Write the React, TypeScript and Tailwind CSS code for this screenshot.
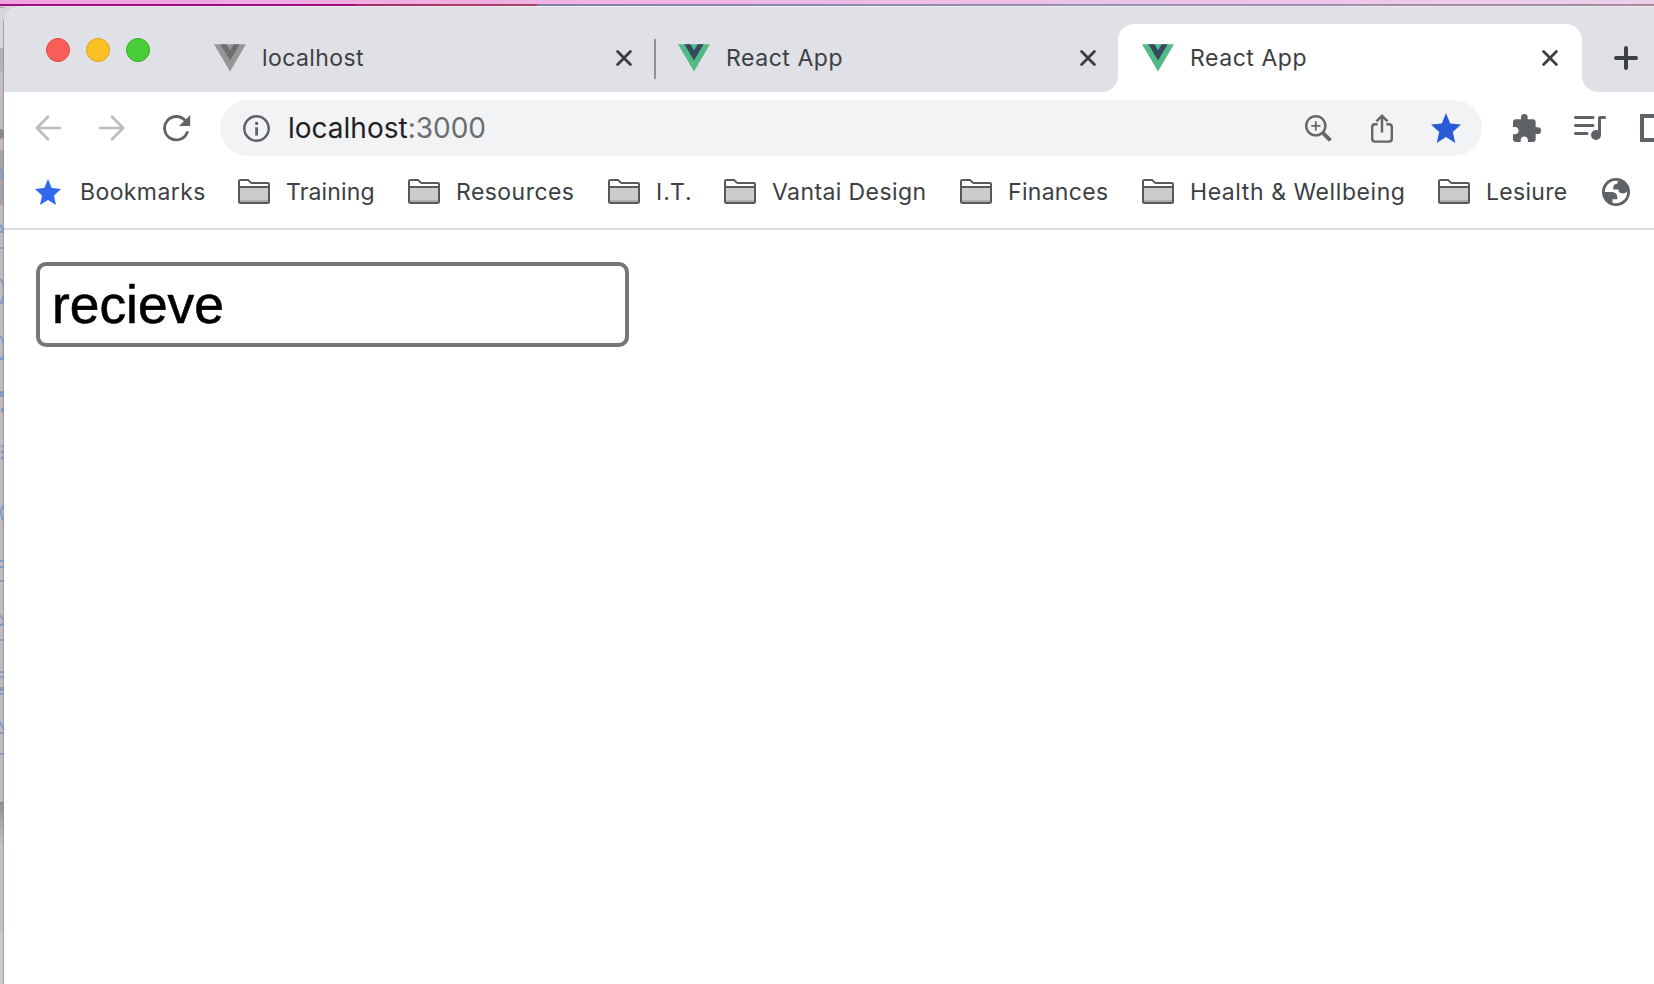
import type { ReactNode } from 'react';

function VueLogo({ outer, inner }: { outer: string; inner: string }) {
  return (
    <svg width="32" height="28" viewBox="0 0 32 28" className="shrink-0">
      <path d="M0 0.2H32L16 27.6Z" fill={outer} />
      <path d="M6.4 0.2H12.4L16 6.4L19.6 0.2H25.6L16 16.6Z" fill={inner} />
    </svg>
  );
}

function CloseIcon() {
  return (
    <svg width="16" height="16" viewBox="0 0 16 16" className="shrink-0">
      <path d="M1.6 1.6L14.4 14.4M14.4 1.6L1.6 14.4" stroke="#3c4043" strokeWidth="2.8" strokeLinecap="round" />
    </svg>
  );
}

function Flare({ side }: { side: 'left' | 'right' }) {
  return (
    <svg
      width="16"
      height="16"
      viewBox="0 0 16 16"
      className={side === 'left' ? 'absolute bottom-0 -left-4' : 'absolute bottom-0 -right-4'}
    >
      <path d={side === 'left' ? 'M16 0V16H0A16 16 0 0 0 16 0Z' : 'M0 0V16H16A16 16 0 0 1 0 0Z'} fill="#fff" />
    </svg>
  );
}

function Tab({ title, gray, active, separator, spacing }: { title: string; gray?: boolean; active?: boolean; separator?: boolean; spacing: string }) {
  return (
    <div
      className={
        active
          ? 'relative flex h-[68px] w-[464px] shrink-0 items-center rounded-t-2xl bg-white pl-6 pr-6'
          : 'relative flex h-[68px] w-[464px] shrink-0 items-center pl-6 pr-[22px]'
      }
    >
      {active && <Flare side="left" />}
      {active && <Flare side="right" />}
      {separator && <span className="absolute left-0 top-[15px] h-10 w-0.5 bg-[#8f9094]" />}
      <VueLogo outer={gray ? '#969696' : '#53b985'} inner={gray ? '#6d6d6d' : '#35495e'} />
      <span className={`ml-4 grow whitespace-nowrap text-[23px] leading-8 text-[#3c4043] ${spacing}`}>{title}</span>
      <CloseIcon />
    </div>
  );
}

function FolderIcon() {
  return (
    <svg width="32" height="25" viewBox="0 0 32 25" className="mb-px shrink-0">
      <path d="M1 23V2.2Q1 1 2.2 1H10.2L13 3.9H30Q31 3.9 31 5V23Q31 24 30 24H2Q1 24 1 23Z" fill="#fff" />
      <path d="M1 8H31V24H1Z" fill="#cccccc" />
      <path d="M1 21H31V24H1Z" fill="#adadad" />
      <path
        d="M1 22.8V2.2Q1 1 2.2 1H9.6Q10.3 1 10.8 1.6L12.2 3.2Q12.8 3.9 13.6 3.9H29.8Q31 3.9 31 5V22.8Q31 24 29.8 24H2.2Q1 24 1 22.8ZM1 8H31"
        fill="none"
        stroke="#595959"
        strokeWidth="2"
      />
    </svg>
  );
}

function Bookmark({ label, width, spacing }: { label: string; width: string; spacing: string }) {
  return (
    <div className={`flex shrink-0 items-center ${width}`}>
      <FolderIcon />
      <Label spacing={spacing}>{label}</Label>
    </div>
  );
}

function Label({ children, spacing }: { children: ReactNode; spacing: string }) {
  return <span className={`ml-4 whitespace-nowrap text-[23px] leading-8 text-[#3c4043] ${spacing}`}>{children}</span>;
}

function Star({ size, fill }: { size: number; fill: string }) {
  return (
    <svg width={size} height={size} viewBox="2 2 20 19" className="mb-px shrink-0" preserveAspectRatio="none">
      <path d="M12 17.27L18.18 21l-1.64-7.03L22 9.24l-7.19-.61L12 2 9.19 8.63 2 9.24l5.46 4.73L5.82 21z" fill={fill} />
    </svg>
  );
}

function BackdropEdge() {
  return (
    <svg width="4" height="978" viewBox="0 0 4 978" className="shrink-0">
      <defs>
        <linearGradient id="shade" x1="0" y1="0" x2="0" y2="1">
          <stop offset="0" stopColor="#929292" />
          <stop offset="1" stopColor="#c3c5c3" />
        </linearGradient>
      </defs>
      <path d="M0 0H4V978H0Z" fill="#c3bbbf" />
      <path d="M0 0H4V42H0Z" fill="#d8d4d8" />
      <path d="M0 1.5H4" stroke="#a5a1a5" />
      <path d="M0 42H4V65H0Z" fill="#b5b0b3" />
      <path d="M0 144H4V199H0Z" fill="#a8a2a4" />
      <circle cx="0" cy="128" r="5" fill="#8e888b" />
      <path
        d="M0 162L4 171H0M0 186H4M0 218L4 226H0M0 242H4M0 273Q4 276 4 284T1 296M0 297H4M0 330Q4 334 4 344T0 352M0 353H4M1 441L4 439M1 447L4 444M1 453L4 450M4 499Q0 503 1 508T4 515M0 555H4M0 561H4M0 575H4M0 609L4 615Q4 619 0 619M0 634H4M0 666H4M0 671H4M0 688H4M0 716L4 724V727H0M0 748H4"
        fill="none"
        stroke="#7f9dce"
        strokeWidth="2"
      />
      <path d="M0 385H4V391H0ZM1 402L4 401V407L1 406ZM0 681H4V685H0Z" fill="#7f9cca" />
      <path d="M0 796H4V842H0Z" fill="url(#shade)" />
      <path d="M0 796.5H4" stroke="#7e7c7c" />
      <path d="M0 842H4V926H0Z" fill="#c0c4c1" />
      <path d="M0 926H4V978H0Z" fill="#cacbca" />
      <path d="M3.5 14V978" stroke="#8d8b8c" strokeOpacity="0.7" />
    </svg>
  );
}

export default function App() {
  return (
    <div className="flex h-[984px] w-[1654px] flex-col overflow-hidden bg-white font-['Inter',sans-serif]">
      <div className="h-1 shrink-0 bg-linear-to-r from-[#f0a4e0] to-[#ecd0ea]" />
      <div className="flex h-0.5 shrink-0">
        <div className="w-[355px] bg-[#9e0f7d]" />
        <div className="w-[182px] bg-linear-to-r from-[#a52a66] to-[#a94464]" />
        <div className="grow bg-linear-to-r from-[#8184a6] via-[#9492b2] to-[#a58ba0]" />
      </div>
      <div className="flex grow">
        <BackdropEdge />
        <div className="flex min-w-0 grow flex-col bg-[#d8d4d8]">
          <header className="flex h-[86px] shrink-0 items-end overflow-hidden rounded-tl-[18px] border-t border-[#eeeef2] bg-[#e0e1e6]">
            <div className="flex w-[186px] shrink-0 gap-4 self-start pl-[42px] pt-[31px]">
              <span className="size-6 rounded-full border border-[#e2463f] bg-[#f95f58]" />
              <span className="size-6 rounded-full border border-[#e0a01b] bg-[#fbc024]" />
              <span className="size-6 rounded-full border border-[#35ad26] bg-[#48cf37]" />
            </div>
            <Tab title="localhost" gray spacing="tracking-[0.4px]" />
            <Tab title="React App" separator spacing="tracking-[0.55px]" />
            <Tab title="React App" active spacing="tracking-[0.55px]" />
            <div className="flex h-[68px] shrink-0 items-center pl-8">
              <svg width="24" height="24" viewBox="0 0 24 24">
                <path d="M12 2V22M2 12H22" stroke="#3c4043" strokeWidth="4" strokeLinecap="round" />
              </svg>
            </div>
          </header>

          <div className="flex h-[72px] shrink-0 items-center overflow-hidden bg-white pl-[31px]">
            <svg width="26" height="26" viewBox="0 0 26 26" className="mb-px shrink-0">
              <path d="M25 13H2M13 1.8L1.8 13L13 24.2" fill="none" stroke="#babcbe" strokeWidth="2.7" strokeLinecap="round" />
            </svg>
            <svg width="26" height="26" viewBox="0 0 26 26" className="mb-px ml-[38px] shrink-0">
              <path d="M1 13H24M13 1.8L24.2 13L13 24.2" fill="none" stroke="#babcbe" strokeWidth="2.7" strokeLinecap="round" />
            </svg>
            <svg width="28" height="28" viewBox="0 0 28 28" className="ml-[38px] shrink-0">
              <path d="M22.2 6.6A11.7 11.7 0 1 0 24.2 18.4" fill="none" stroke="#5f6368" strokeWidth="2.8" strokeLinecap="round" />
              <path d="M27.2 1V12H16Z" fill="#5f6368" />
            </svg>

            <div className="ml-[29px] flex h-14 w-[1262px] shrink-0 items-center rounded-full bg-[#f1f3f4] pl-[23px] pr-[21px]">
              <svg width="27" height="27" viewBox="0 0 27 27" className="shrink-0">
                <circle cx="13.5" cy="13.5" r="12.2" fill="none" stroke="#5f6368" strokeWidth="2.5" />
                <path d="M12.2 7H15V10H12.2ZM12.2 12.2H15V20.5H12.2Z" fill="#5f6368" />
              </svg>
              <div className="ml-[18px] grow whitespace-nowrap text-[28px] leading-9 text-[#202124]">
                localhost<span className="text-[#6b6e71]">:3000</span>
              </div>
              <svg width="27" height="27" viewBox="0 0 27 27" className="shrink-0">
                <circle cx="10.8" cy="10.8" r="9.6" fill="none" stroke="#666" strokeWidth="2.4" />
                <path d="M10.8 6.2V15.4M6.2 10.8H15.4" stroke="#666" strokeWidth="1.8" />
                <path d="M17.6 17.6L25.4 25.4" stroke="#666" strokeWidth="4" />
              </svg>
              <svg width="22" height="29" viewBox="0 0 22 29" className="ml-[39px] shrink-0">
                <path d="M6.6 10.2H4Q1.2 10.2 1.2 13V24.8Q1.2 27.6 4 27.6H18Q20.8 27.6 20.8 24.8V13Q20.8 10.2 18 10.2H15.4" fill="none" stroke="#666" strokeWidth="2.4" />
                <path d="M11 18.6V2.4M5.4 7.4L11 1.8L16.6 7.4" fill="none" stroke="#666" strokeWidth="2.4" />
              </svg>
              <span className="ml-[38px]">
                <Star size={30} fill="#2a5bd7" />
              </span>
            </div>

            <svg width="28" height="28" viewBox="2 1 21 21" className="mb-px ml-[31px] shrink-0">
              <path
                d="M20.5 11H19V7c0-1.1-.9-2-2-2h-4V3.5a2.5 2.5 0 0 0-5 0V5H4c-1.1 0-1.99.9-1.99 2v3.8H3.5c1.49 0 2.7 1.21 2.7 2.7s-1.21 2.7-2.7 2.7H2V20c0 1.1.9 2 2 2h3.8v-1.5c0-1.49 1.21-2.7 2.7-2.7s2.7 1.21 2.7 2.7V22H17c1.1 0 2-.9 2-2v-4h1.5a2.5 2.5 0 0 0 0-5z"
                fill="#5f6368"
              />
            </svg>
            <svg width="32" height="26" viewBox="0 0 32 26" className="ml-[33px] shrink-0">
              <path d="M1.5 2.5H19M1.5 10.5H19M1.5 18.5H13" stroke="#5f6368" strokeWidth="3" strokeLinecap="round" />
              <circle cx="22" cy="20" r="5" fill="#5f6368" />
              <path d="M24 20V3Q24 1 26 1H31Q32 1 32 2.5T31 4H27V20Z" fill="#5f6368" />
            </svg>
            <div className="ml-[34px] h-7 w-8 shrink-0 border-4 border-[#5f6368]" />
          </div>

          <nav className="flex h-14 shrink-0 items-center overflow-hidden bg-white pl-[31px]">
            <div className="flex w-[203px] shrink-0 items-center">
              <Star size={26} fill="#3069f0" />
              <span className="ml-[19px] whitespace-nowrap text-[23px] leading-8 tracking-[0.4px] text-[#3c4043]">Bookmarks</span>
            </div>
            <Bookmark label="Training" width="w-[170px]" spacing="tracking-[0.15px]" />
            <Bookmark label="Resources" width="w-[200px]" spacing="tracking-[0.45px]" />
            <Bookmark label="I.T." width="w-[116px]" spacing="tracking-[1px]" />
            <Bookmark label="Vantai Design" width="w-[236px]" spacing="tracking-[0.4px]" />
            <Bookmark label="Finances" width="w-[182px]" spacing="tracking-[0.3px]" />
            <Bookmark label="Health &amp; Wellbeing" width="w-[296px]" spacing="tracking-[0.57px]" />
            <Bookmark label="Lesiure" width="w-[164px]" spacing="tracking-[0.3px]" />
            <svg width="28" height="28" viewBox="2 2 20 20" className="shrink-0">
              <circle cx="12" cy="12" r="10" fill="#5f6368" />
              <path
                d="M4 12h4.4c3.407.022 4.922 1.73 4.543 5.127H9.488v2.47a8.004 8.004 0 0 0 10.498-8.083C19.327 12.504 18.332 13 17 13c-2.137 0-3.206-.916-3.206-2.75h-3.748c-.274-2.728.683-4.092 2.87-4.092 0-.975.327-1.597.811-1.97A8.004 8.004 0 0 0 4 12z"
                fill="#fff"
              />
            </svg>
          </nav>
          <div className="h-2 shrink-0 bg-white" />
          <div className="h-0.5 shrink-0 bg-[#dadadb]" />

          <main className="grow bg-white pl-8 pt-8">
            <input
              type="text"
              aria-label="Word"
              defaultValue="recieve"
              spellCheck={false}
              className="block h-[85px] w-[593px] rounded-[10px] border-4 border-[#767676] bg-white pl-3 pr-2 font-['Liberation_Sans',Arial,sans-serif] text-[53.33px] text-black outline-none [-webkit-text-stroke:0.6px_black]"
            />
          </main>
        </div>
      </div>
    </div>
  );
}
